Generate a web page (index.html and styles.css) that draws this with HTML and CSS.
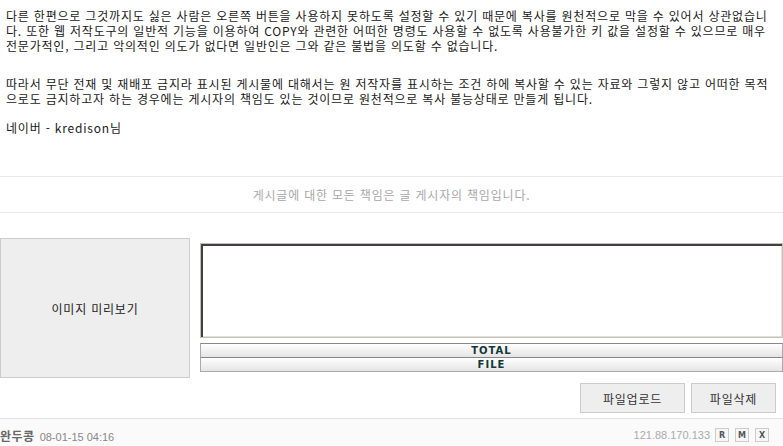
FILE: index.html
```html
<!DOCTYPE html>
<html lang="ko">
<head>
<meta charset="utf-8">
<title>게시글</title>
<link rel="stylesheet" href="styles.css">
</head>
<body>
<div class="content">
  <p class="para p1">다른 한편으로 그것까지도 싫은 사람은 오른쪽 버튼을 사용하지 못하도록 설정할 수 있기 때문에 복사를 원천적으로 막을 수 있어서 상관없습니<br>다. 또한 웹 저작도구의 일반적 기능을 이용하여 COPY와 관련한 어떠한 명령도 사용할 수 없도록 사용불가한 키 값을 설정할 수 있으므로 매우<br>전문가적인, 그리고 악의적인 의도가 없다면 일반인은 그와 같은 불법을 의도할 수 없습니다.</p>
  <p class="para p2">따라서 무단 전재 및 재배포 금지라 표시된 게시물에 대해서는 원 저작자를 표시하는 조건 하에 복사할 수 있는 자료와 그렇지 않고 어떠한 목적<br>으로도 금지하고자 하는 경우에는 게시자의 책임도 있는 것이므로 원천적으로 복사 불능상태로 만들게 됩니다.</p>
  <p class="para p3">네이버 - kredison님</p>
</div>

<div class="notice">게시글에 대한 모든 책임은 글 게시자의 책임입니다.</div>

<div class="upload">
  <div class="preview">이미지 미리보기</div>
  <div class="filecol">
    <textarea class="filebox"></textarea>
    <div class="bars">
      <div class="bar bar-total">TOTAL</div>
      <div class="bar bar-file">FILE</div>
    </div>
  </div>
</div>

<div class="actions">
  <button class="btn btn-upload">파일업로드</button>
  <button class="btn btn-delete">파일삭제</button>
</div>

<div class="footer">
  <div class="author"><span class="name">완두콩</span><span class="date">08-01-15 04:16</span></div>
  <div class="meta">
    <span class="ip">121.88.170.133</span>
    <span class="tag">R</span>
    <span class="tag">M</span>
    <span class="tag">X</span>
  </div>
</div>
</body>
</html>
```
FILE: styles.css
```css
html, body {
  margin: 0;
  padding: 0;
  background: #fff;
}
body {
  font-family: "Noto Sans CJK KR", "Noto Sans", sans-serif;
  font-size: 12px;
  color: #1a1a1a;
  width: 783px;
  height: 446px;
  overflow: hidden;
}
.content {
  padding: 8px 6px 0;
}
.para {
  margin: 0;
  line-height: 15px;
  white-space: nowrap;
  letter-spacing: 0.8px;
}
.p2 { margin-top: 23px; }
.p3 { margin-top: 14px; }

.notice {
  margin-top: 41px;
  height: 35px;
  line-height: 35px;
  border-top: 1px solid #e8e8e8;
  border-bottom: 1px solid #e8e8e8;
  text-align: center;
  color: #a8a8a8;
  letter-spacing: 0.8px;
}

.upload {
  margin-top: 25px;
  display: flex;
  align-items: flex-start;
  gap: 10px;
}
.preview {
  width: 188px;
  height: 138px;
  background: #eee;
  border: 1px solid #ccc;
  display: flex;
  align-items: center;
  justify-content: center;
  color: #222;
  letter-spacing: 0.8px;
}
.filecol {
  flex: 1;
  padding-top: 5px;
  display: flex;
  flex-direction: column;
}
.filebox {
  display: block;
  box-sizing: border-box;
  width: 100%;
  height: 95px;
  margin: 0;
  padding: 0;
  resize: none;
  background: #fff;
  border: 1px solid #c4c0b8;
  box-shadow: inset 2px 2px 0 #404040, inset -1px -1px 0 #e4e0d8;
  outline: none;
}
.bars {
  margin-top: 5px;
}
.bar {
  height: 13px;
  line-height: 14px;
  border: 1px solid #aaa;
  border-top-color: #888;
  background: linear-gradient(#fff, #e4e4e4);
  text-align: center;
  font-family: "DejaVu Sans", sans-serif;
  font-weight: bold;
  font-size: 10px;
  letter-spacing: 1px;
  color: #123838;
}
.bar-total {
  border-bottom: none;
}

.actions {
  margin-top: 5px;
  display: flex;
  justify-content: flex-end;
  gap: 6px;
  padding-right: 7px;
}
.btn {
  height: 30px;
  margin: 0;
  padding: 0;
  background: #eee;
  border: 1px solid #ccc;
  font-family: "Noto Sans CJK KR", sans-serif;
  font-size: 12px;
  letter-spacing: 0.8px;
  color: #333;
}
.btn-upload { width: 105px; }
.btn-delete { width: 85px; }

.footer {
  margin-top: 5px;
  height: 27px;
  border-top: 1px solid #e2e2e2;
  background: #fafafa;
  display: flex;
  align-items: center;
  justify-content: space-between;
  padding-top: 6px;
  box-sizing: border-box;
}
.author {
  display: flex;
  align-items: baseline;
}
.name {
  font-weight: bold;
  color: #666;
  margin-right: 5px;
  letter-spacing: 0.5px;
}
.date {
  font-family: "Liberation Sans", sans-serif;
  font-size: 11px;
  color: #888;
}
.meta {
  display: flex;
  align-items: center;
  gap: 6px;
  padding-right: 14px;
}
.ip {
  font-family: "Liberation Sans", sans-serif;
  font-size: 11px;
  color: #aaa;
  margin-right: -1px;
}
.tag {
  box-sizing: border-box;
  width: 14px;
  height: 14px;
  border: 1px solid #ccc;
  background: #f6f6f6;
  display: flex;
  align-items: center;
  justify-content: center;
  font-family: "DejaVu Sans", sans-serif;
  font-size: 8px;
  font-weight: bold;
  color: #555;
}
```
